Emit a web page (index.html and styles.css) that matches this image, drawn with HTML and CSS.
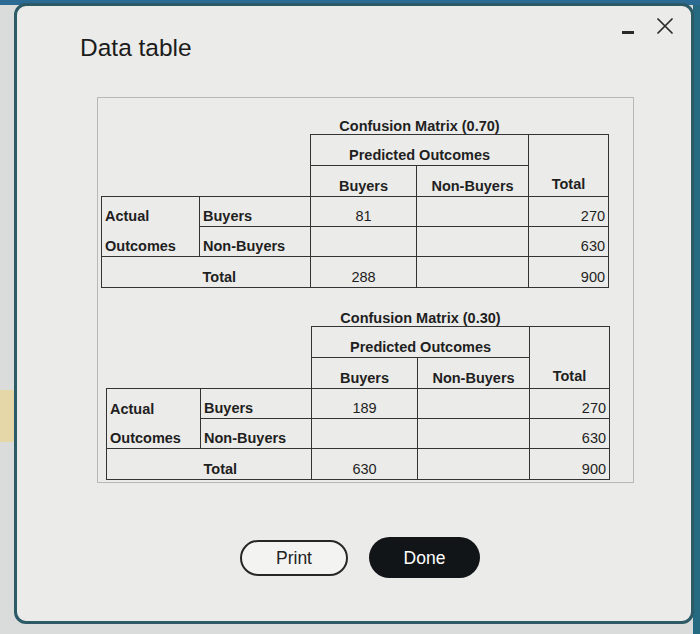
FILE: index.html
```html
<!DOCTYPE html>
<html lang="en">
<head>
<meta charset="utf-8">
<title>Data table</title>
<link rel="stylesheet" href="styles.css">
</head>
<body>
<div class="screen">
  <div class="dialog">
    <div class="dialog-header">
      <h1 class="dialog-title">Data table</h1>
      <div class="window-controls">
        <span class="ctrl-min"></span>
        <svg class="ctrl-close" width="16" height="16" viewBox="0 0 16 16" aria-label="Close">
          <path d="M1 1 L15 15 M15 1 L1 15" stroke="#2a2a2a" stroke-width="1.7" fill="none" stroke-linecap="round"/>
        </svg>
      </div>
    </div>

    <div class="data-box">
      <table class="matrix">
        <colgroup>
          <col class="c-actual"><col class="c-label"><col class="c-buy"><col class="c-non"><col class="c-total">
        </colgroup>
        <tr class="r-title">
          <td colspan="2"></td>
          <td colspan="2" class="title">Confusion Matrix (0.70)</td>
          <td></td>
        </tr>
        <tr class="r-head">
          <td colspan="2"></td>
          <td colspan="2" class="b head">Predicted Outcomes</td>
          <td rowspan="2" class="b head total-head">Total</td>
        </tr>
        <tr class="r-head">
          <td colspan="2"></td>
          <td class="b head">Buyers</td>
          <td class="b head">Non-Buyers</td>
        </tr>
        <tr class="r-data">
          <td class="lbl actual-top">Actual</td>
          <td class="b lbl">Buyers</td>
          <td class="b num">81</td>
          <td class="b"></td>
          <td class="b tot">270</td>
        </tr>
        <tr class="r-data">
          <td class="lbl actual-bottom">Outcomes</td>
          <td class="b lbl">Non-Buyers</td>
          <td class="b num"></td>
          <td class="b"></td>
          <td class="b tot">630</td>
        </tr>
        <tr class="r-data r-last">
          <td class="total-left"></td>
          <td class="lbl total-right">Total</td>
          <td class="b num">288</td>
          <td class="b"></td>
          <td class="b tot">900</td>
        </tr>
      </table>

      <table class="matrix matrix-second">
        <colgroup>
          <col class="c-actual"><col class="c-label"><col class="c-buy"><col class="c-non"><col class="c-total">
        </colgroup>
        <tr class="r-title">
          <td colspan="2"></td>
          <td colspan="2" class="title">Confusion Matrix (0.30)</td>
          <td></td>
        </tr>
        <tr class="r-head">
          <td colspan="2"></td>
          <td colspan="2" class="b head">Predicted Outcomes</td>
          <td rowspan="2" class="b head total-head">Total</td>
        </tr>
        <tr class="r-head">
          <td colspan="2"></td>
          <td class="b head">Buyers</td>
          <td class="b head">Non-Buyers</td>
        </tr>
        <tr class="r-data">
          <td class="lbl actual-top">Actual</td>
          <td class="b lbl">Buyers</td>
          <td class="b num">189</td>
          <td class="b"></td>
          <td class="b tot">270</td>
        </tr>
        <tr class="r-data">
          <td class="lbl actual-bottom">Outcomes</td>
          <td class="b lbl">Non-Buyers</td>
          <td class="b num"></td>
          <td class="b"></td>
          <td class="b tot">630</td>
        </tr>
        <tr class="r-data r-last">
          <td class="total-left"></td>
          <td class="lbl total-right">Total</td>
          <td class="b num">630</td>
          <td class="b"></td>
          <td class="b tot">900</td>
        </tr>
      </table>
    </div>

    <div class="button-row">
      <button class="btn btn-print" type="button">Print</button>
      <button class="btn btn-done" type="button">Done</button>
    </div>
  </div>
</div>
</body>
</html>
```

FILE: styles.css
```css
* {
  box-sizing: border-box;
}

html, body {
  margin: 0;
  padding: 0;
}

body {
  width: 700px;
  height: 634px;
  overflow: hidden;
  font-family: "Liberation Sans", Arial, sans-serif;
  color: #1f1f1f;
  background:
    linear-gradient(to bottom, #2b6b93 0, #2b6b93 5px, transparent 5px),
    linear-gradient(to right, transparent 0, transparent 693px, #256a80 693px),
    linear-gradient(to bottom, #dadcdb 0, #dadcdb 390px, #e6d7a8 390px, #e6d7a8 442px, #dadcdb 442px);
}

.screen {
  padding: 3px 0 0 14px;
}

.dialog {
  width: 680px;
  height: 621px;
  border: 3px solid #2c5a66;
  border-radius: 12px;
  background: #ebebe9;
  display: flex;
  flex-direction: column;
}

.dialog-header {
  display: flex;
  justify-content: space-between;
  align-items: flex-start;
  padding: 12px 18px 0 63px;
}

.dialog-title {
  margin: 16px 0 0 0;
  font-size: 24.5px;
  line-height: 28px;
  font-weight: normal;
  color: #1c1c1c;
}

.window-controls {
  display: flex;
  align-items: center;
  gap: 23px;
  height: 16px;
}

.ctrl-min {
  display: block;
  width: 12px;
  height: 3px;
  background: #2a2a2a;
  margin-top: 12px;
}

.ctrl-close {
  display: block;
}

.data-box {
  margin: 35px 0 0 80px;
  width: 537px;
  height: 386px;
  border: 1px solid #b8b8b6;
  padding: 15px 0 0 3px;
}

.matrix {
  border-collapse: collapse;
  table-layout: fixed;
  width: 507px;
  font-size: 14.5px;
  line-height: 16px;
}

.matrix-second {
  margin: 18px 0 0 5px;
  width: 503px;
}

.c-actual { width: 98px; }
.c-label { width: 111px; }
.c-buy { width: 106px; }
.c-non { width: 112px; }
.c-total { width: 80px; }

.matrix-second .c-actual { width: 94px; }

.matrix td {
  padding: 0 3px 2px 3px;
  vertical-align: bottom;
  white-space: nowrap;
}

.r-title { height: 21px; }
.r-head { height: 31px; }
.r-data { height: 30px; }
.r-last { height: 31px; }

.matrix td.title {
  font-weight: bold;
  text-align: center;
  padding-bottom: 0;
}

.matrix td.b {
  border: 1px solid #333;
}

.head {
  font-weight: bold;
  text-align: center;
}

.matrix td.total-head {
  padding-bottom: 4px;
}

.lbl {
  font-weight: bold;
  text-align: left;
}

.num {
  text-align: center;
}

.tot {
  text-align: right;
}

.matrix td.actual-top {
  border-left: 1px solid #333;
  border-top: 1px solid #333;
  border-bottom: none;
}

.matrix td.actual-bottom {
  border-left: 1px solid #333;
  border-bottom: 1px solid #333;
  border-top: none;
}

.matrix td.total-left {
  border-left: 1px solid #333;
  border-top: 1px solid #333;
  border-bottom: 1px solid #333;
  border-right: none;
}

.matrix td.total-right {
  border-top: 1px solid #333;
  border-bottom: 1px solid #333;
  border-right: 1px solid #333;
  border-left: none;
}

.button-row {
  display: flex;
  align-items: center;
  gap: 21px;
  margin-top: 54px;
  padding-left: 223px;
}

.btn {
  font-family: "Liberation Sans", Arial, sans-serif;
  font-size: 17.5px;
  line-height: 20px;
  padding: 0;
  cursor: pointer;
}

.btn-print {
  width: 108px;
  height: 36px;
  border: 2px solid #262626;
  border-radius: 18px;
  background: #f3f3f1;
  color: #222;
}

.btn-done {
  width: 111px;
  height: 41px;
  border: none;
  border-radius: 21px;
  background: #121518;
  color: #ffffff;
}
```
